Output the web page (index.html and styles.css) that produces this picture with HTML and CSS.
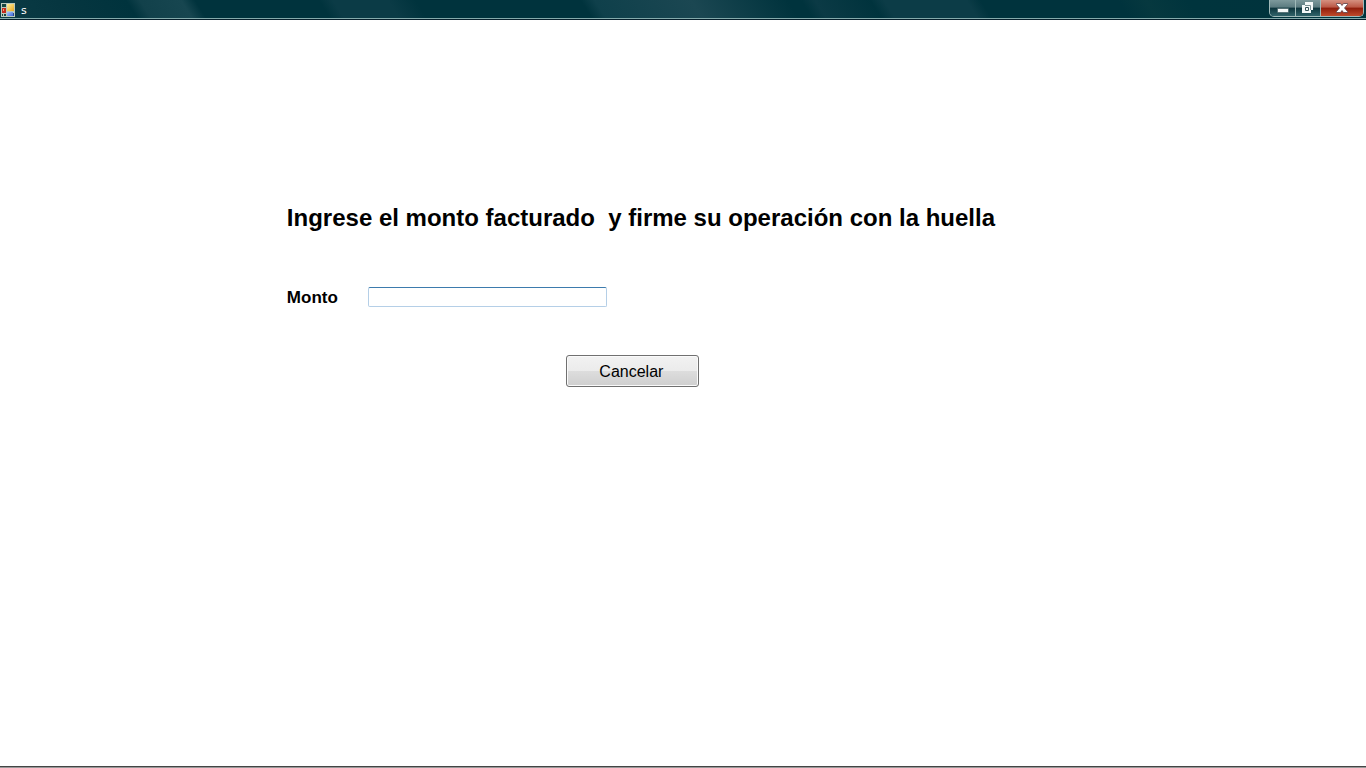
FILE: index.html
```html
<!DOCTYPE html>
<html lang="es">
<head>
<meta charset="utf-8">
<title>s</title>
<link rel="stylesheet" href="styles.css">
</head>
<body>
<header class="titlebar">
  <svg class="app-icon" width="14" height="14" viewBox="0 0 14 14" aria-hidden="true">
    <defs>
      <linearGradient id="gold" x2="1" y2="1"><stop stop-color="#fff0a0"/><stop offset="1" stop-color="#e8a820"/></linearGradient>
      <linearGradient id="blue" x2="1" y2="1"><stop stop-color="#a8c8ff"/><stop offset="1" stop-color="#4068d8"/></linearGradient>
    </defs>
    <path fill="#b9c9bd" d="M0 0h14v14H0z"/>
    <path fill="#17453f" d="M1 1h4v3H1zM1 11h1v2H1zM3 11h2v2H3z"/>
    <path fill="#c32b1c" d="M1 5h4v5H1z"/>
    <path fill="#f39a80" d="M2 6h1v2H2z"/>
    <path fill="url(#gold)" d="M6 1h7v7H6z"/>
    <path fill="url(#blue)" d="M6 9h6v4H6z"/>
    <path fill="#29458f" d="M12 10h1v3h-1z"/>
  </svg>
  <span class="window-title">s</span>
  <div class="window-controls">
    <button class="control minimize" type="button" aria-label="Minimizar">
      <svg width="12" height="14" viewBox="0 0 12 14"><path fill="#f4f8f8" stroke="#36545a" stroke-width=".6" d="M.5 7.500h11v4H.5z"/></svg>
    </button>
    <button class="control restore" type="button" aria-label="Restaurar">
      <svg width="12" height="14" viewBox="0 0 12 14"><path fill="#f4f8f8" d="M3 1h8v8H9v3H0V4h3z"/><path fill="none" stroke="#7d9396" d="M3 4.500h5.500V9"/><path fill="#f4f8f8" stroke="#36545a" d="M3.500 6.500h3v3h-3z"/></svg>
    </button>
    <button class="control close" type="button" aria-label="Cerrar">
      <svg width="12" height="14" viewBox="0 0 12 14"><path fill="#fff" stroke="#5b4048" stroke-width=".8" d="M.5 2.500h4L6 4.500l1.500-2h4v1L8.500 7l3 3.500v1h-4L6 9.500l-1.500 2h-4v-1l3-3.500-3-3.500z"/></svg>
    </button>
  </div>
</header>
<main class="content">
  <h1 class="heading">Ingrese el monto facturado  y firme su operación con la huella</h1>
  <form class="form">
    <div class="field">
      <label class="label" for="monto">Monto</label>
      <input class="amount" id="monto" name="monto" type="text">
    </div>
    <button class="cancel" type="button">Cancelar</button>
  </form>
</main>
</body>
</html>
```
FILE: styles.css
```css
* { box-sizing: border-box; }

body {
  display: flex;
  flex-direction: column;
  min-height: 100vh;
  margin: 0;
  background: #fff;
  color: #000;
  font-family: "Liberation Sans", Arial, sans-serif;
}

.titlebar {
  display: flex;
  align-items: flex-start;
  height: 20px;
  padding: 0 2px 0 1px;
  border-bottom: 1px solid #061f2b;
  box-shadow: inset 0 -1px #84aaab;
  background: linear-gradient(58deg,
    #0b3b45 0, #063640 5%, #00333d 10%, #12414b 11%, #174650 14%, #00333d 15%,
    #00333d 24%, #0b3b46 25%, #0b3b46 29%, #00333d 31%,
    #00333d 43%, #0f404b 44%, #1b4752 51%, #00333d 58%,
    #00333d 59%, #0b3a45 60%, #00333d 64%, #0c3c47 65%, #0c3c47 71%, #00333d 72%,
    #00333d 82%, #06383f 84%, #00343d 87%, #00333d 100%);
}

.app-icon { margin-top: 3px; }

.window-title {
  margin: 4px 0 0 6px;
  color: #fff;
  font: 11px/13px "DejaVu Sans", sans-serif;
}

.window-controls {
  display: flex;
  height: 17px;
  margin-left: auto;
  overflow: hidden;
  border: 1px solid #9fb9b9;
  border-top: 0;
  border-radius: 0 0 5px 5px;
}

.control {
  display: flex;
  align-items: center;
  justify-content: center;
  width: 26px;
  padding: 0;
  border: 0;
  border-right: 1px solid #9fb9b9;
  background: linear-gradient(#7d999c 0, #5b7b80 45%, #0c343c 50%, #31636a 100%);
}

.restore { width: 25px; }

.close {
  width: 42px;
  border-right: 0;
  background: linear-gradient(#d59080 0, #bb5745 45%, #8f1c0b 50%, #c04a2b 100%);
}

.content {
  flex: 1;
  padding: 183px 0 0 21%;
  border-bottom: 1px solid #999;
  box-shadow: inset 0 -1px #444;
}

.heading {
  margin: 0;
  font-size: 24px;
  line-height: 30px;
  white-space: pre;
}

.form {
  display: flex;
  flex-direction: column;
  width: 412px;
  gap: 46px;
  margin-top: 54px;
}

.field {
  display: flex;
  align-items: flex-start;
}

.label {
  width: 81px;
  font-size: 17px;
  line-height: 22px;
  font-weight: bold;
}

.amount {
  width: 239px;
  height: 20px;
  padding: 0 3px;
  border: 1px solid #b5cfe7;
  border-top-color: #3d7bad;
  border-radius: 2px;
  outline: 0;
  font: inherit;
}

.cancel {
  align-self: flex-end;
  width: 133px;
  height: 32px;
  padding: 2px 2px 0 0;
  border: 1px solid #707070;
  border-radius: 3px;
  box-shadow: inset 0 0 0 1px #fafafa;
  background: linear-gradient(#f2f2f2 0, #ebebeb 50%, #ddd 50%, #cfcfcf 100%);
  color: #000;
  font: 16px/20px "Liberation Sans", Arial, sans-serif;
}
```
